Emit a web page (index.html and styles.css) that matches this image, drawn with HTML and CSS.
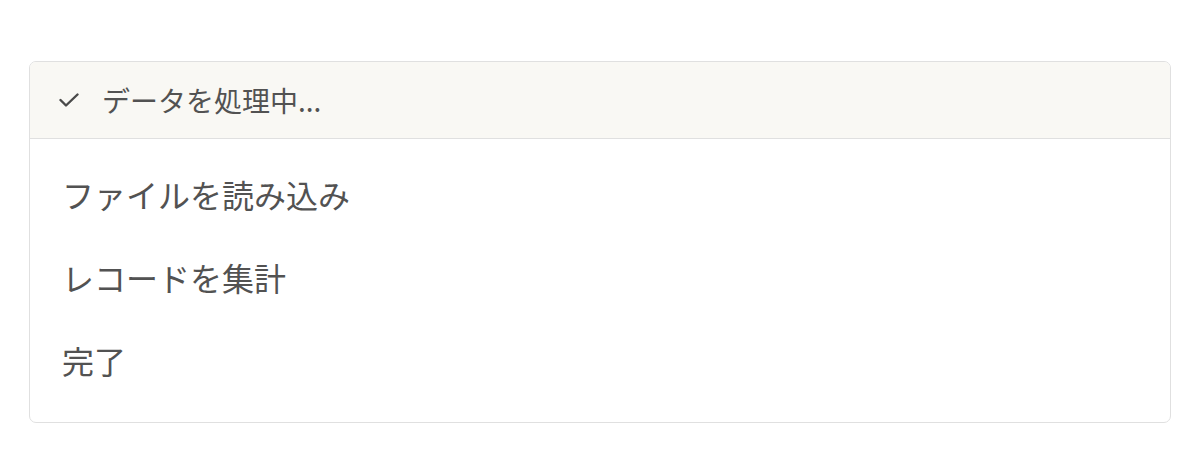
FILE: index.html
```html
<!DOCTYPE html>
<html lang="ja">
<head>
<meta charset="utf-8">
<link rel="stylesheet" href="styles.css">
</head>
<body>
<div class="page">
  <div class="card">
    <div class="card-header">
      <svg class="check" width="20" height="16" viewBox="0 0 20 16"><path d="M1.5 8 L7 13.5 L18.5 2.5" fill="none" stroke="#4a4a4a" stroke-width="2.4" stroke-linecap="round" stroke-linejoin="round"/></svg>
      <span class="title">データを処理中...</span>
    </div>
    <div class="card-body">
      <div class="row">ファイルを読み込み</div>
      <div class="row">レコードを集計</div>
      <div class="row">完了</div>
    </div>
  </div>
</div>
</body>
</html>
```
FILE: styles.css
```css
html, body { margin: 0; padding: 0; background: #fff; }
body { font-family: "Noto Sans CJK JP", "Noto Sans", sans-serif; color: #525252; }
.page { padding: 61px 29px 0 29px; }
.card {
  border: 1px solid #e0e0e0;
  border-radius: 7px;
  overflow: hidden;
  height: 362px;
  box-sizing: border-box;
}
.card-header {
  background: #f9f8f4;
  border-bottom: 1px solid #e0e0e0;
  height: 77px;
  box-sizing: border-box;
  display: flex;
  align-items: center;
  padding-left: 29px;
  gap: 23px;
}
.check { flex: none; }
.title { font-size: 28px; line-height: 1; }
.card-body { padding: 14px 32px 0 32px; }
.row { font-size: 32px; height: 83px; line-height: 83px; }
```
